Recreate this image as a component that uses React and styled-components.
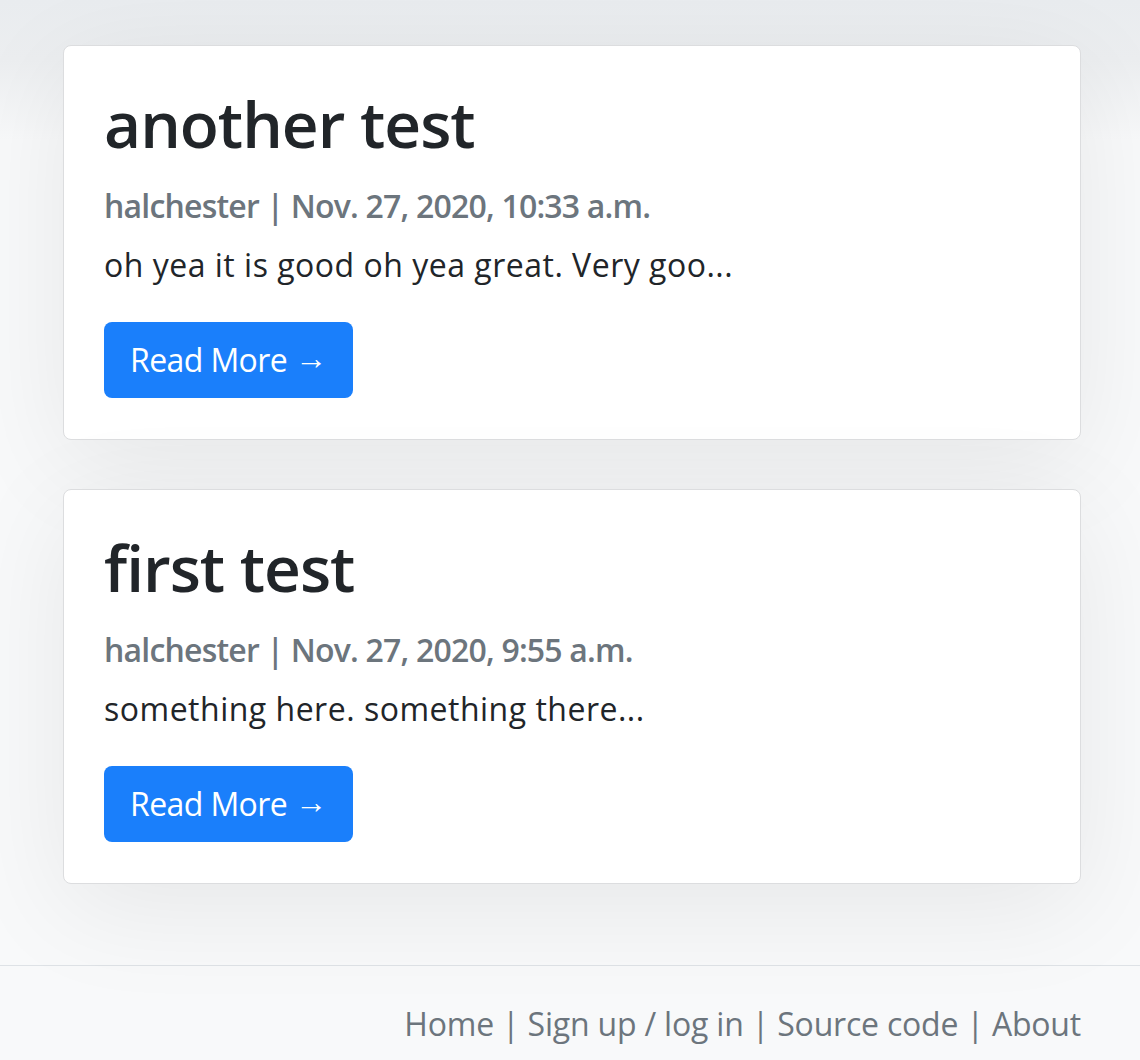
import React from "react";
import styled, { createGlobalStyle } from "styled-components";

const posts = [
  {
    title: "another test",
    author: "halchester",
    date: "Nov. 27, 2020, 10:33 a.m.",
    excerpt: "oh yea it is good oh yea great. Very goo...",
  },
  {
    title: "first test",
    author: "halchester",
    date: "Nov. 27, 2020, 9:55 a.m.",
    excerpt: "something here. something there...",
  },
];

const footerLinks = ["Home", "Sign up / log in", "Source code", "About"];

const GlobalStyle = createGlobalStyle`
  html, body {
    margin: 0;
    padding: 0;
    background: #f8f9fa;
    font-family: "Open Sans", "Noto Sans", sans-serif;
    color: #212529;
  }
  * {
    box-sizing: border-box;
  }
`;

const App = () => {
  return (
    <>
      <GlobalStyle />
      <Page>
        <Main>
          {posts.map((post) => (
            <Card key={post.title}>
              <CardTitle>{post.title}</CardTitle>
              <Meta>
                {post.author} | {post.date}
              </Meta>
              <Excerpt>{post.excerpt}</Excerpt>
              <ReadMore href="#">
                Read More <Arrow>&rarr;</Arrow>
              </ReadMore>
            </Card>
          ))}
        </Main>
        <Footer>
          {footerLinks.map((link, index) => (
            <React.Fragment key={link}>
              {index > 0 && " | "}
              <FooterLink href="#">{link}</FooterLink>
            </React.Fragment>
          ))}
        </Footer>
      </Page>
    </>
  );
};

const Page = styled.div`
  min-height: 1060px;
  background: linear-gradient(
    to bottom,
    #e9ecef 0px,
    #eceef0 60px,
    rgba(248, 249, 250, 0) 140px
  );
`;

const Main = styled.main`
  display: flex;
  flex-direction: column;
  gap: 49px;
  padding: 45px 59px 81px 63px;
`;

const Card = styled.article`
  background: #fff;
  border: 1px solid #dcdddf;
  border-radius: 8px;
  padding: 40px 40px 41px;
  box-shadow: 0 24px 110px rgba(0, 0, 0, 0.075);
`;

const CardTitle = styled.h2`
  margin: 0 0 24px;
  font-size: 64px;
  font-weight: 600;
  line-height: 1.2;
  letter-spacing: -1px;
  color: #212529;
`;

const Meta = styled.h6`
  margin: 0 0 16px;
  font-size: 32px;
  font-weight: 600;
  line-height: 1.2;
  color: #6c757d;
  letter-spacing: -0.8px;
`;

const Excerpt = styled.p`
  margin: 0 0 33px;
  font-size: 32px;
  line-height: 1.5;
  letter-spacing: 0.5px;
`;

const ReadMore = styled.a`
  display: inline-flex;
  align-items: center;
  gap: 8px;
  height: 76px;
  padding: 0 27px 0 26px;
  background: #1a7ffb;
  color: #fff;
  border-radius: 8px;
  font-size: 32px;
  line-height: 1.5;
  text-decoration: none;
  letter-spacing: -0.6px;
`;

const Arrow = styled.span`
  font-family: "Liberation Sans", sans-serif;
  font-size: 32px;
  line-height: 1;
  padding-bottom: 4px;
`;

const Footer = styled.footer`
  border-top: 1px solid #dee2e6;
  text-align: right;
  white-space: pre;
  padding: 34px 59px 20px 0;
  font-size: 32px;
  line-height: 1.5;
  color: #6c757d;
  letter-spacing: -0.2px;
`;

const FooterLink = styled.a`
  color: #6c757d;
  text-decoration: none;
`;

export default App;
